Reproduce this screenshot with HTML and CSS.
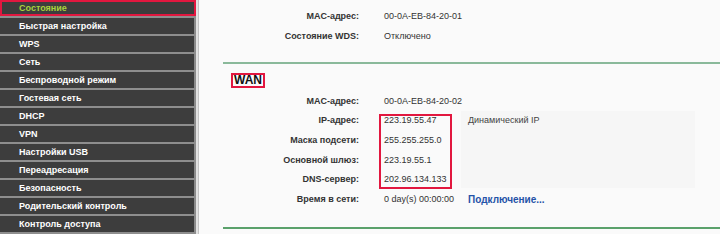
FILE: index.html
```html
<!DOCTYPE html>
<html lang="ru">
<head>
<meta charset="utf-8">
<title>Состояние</title>
<link rel="stylesheet" href="styles.css">
</head>
<body>
<div class="page">
  <nav class="menu">
    <div class="item active">Состояние</div>
    <div class="item">Быстрая настройка</div>
    <div class="item">WPS</div>
    <div class="item">Сеть</div>
    <div class="item">Беспроводной режим</div>
    <div class="item">Гостевая сеть</div>
    <div class="item">DHCP</div>
    <div class="item">VPN</div>
    <div class="item">Настройки USB</div>
    <div class="item">Переадресация</div>
    <div class="item">Безопасность</div>
    <div class="item">Родительский контроль</div>
    <div class="item">Контроль доступа</div>
  </nav>
  <div class="gutter"></div>
  <main class="main">
    <div class="tbl top">
      <div class="lbl">MAC-адрес:</div><div class="val">00-0A-EB-84-20-01</div><div class="ext"></div>
      <div class="lbl">Состояние WDS:</div><div class="val">Отключено</div><div class="ext"></div>
    </div>
    <div class="rule"></div>
    <div class="sect"><span class="sect-box">WAN</span></div>
    <div class="tbl wan">
      <div class="panel"></div>
      <div class="lbl">MAC-адрес:</div><div class="val">00-0A-EB-84-20-02</div><div class="ext"></div>
      <div class="lbl">IP-адрес:</div><div class="val">223.19.55.47</div><div class="ext">Динамический IP</div>
      <div class="lbl">Маска подсети:</div><div class="val">255.255.255.0</div><div class="ext"></div>
      <div class="lbl">Основной шлюз:</div><div class="val">223.19.55.1</div><div class="ext"></div>
      <div class="lbl">DNS-сервер:</div><div class="val">202.96.134.133</div><div class="ext"></div>
      <div class="lbl">Время в сети:</div><div class="val">0 day(s) 00:00:00</div><div class="ext"><a class="link" href="#">Подключение...</a></div>
      <div class="mark"></div>
    </div>
    <div class="rule rule-bottom"></div>
  </main>
</div>
</body>
</html>
```

FILE: styles.css
```css
html, body {
  margin: 0;
  padding: 0;
  background: #fafafa;
  overflow: hidden;
}
body {
  font-family: "Liberation Sans", Arial, sans-serif;
  font-size: 9px;
  color: #333;
}
.page {
  display: flex;
  align-items: flex-start;
  width: 720px;
  height: 234px;
}
.menu {
  flex: 0 0 196px;
  display: flex;
  flex-direction: column;
  background: #8b8b8b;
}
.item {
  height: 16px;
  line-height: 17px;
  border-bottom: 2px solid #8e8e8e;
  background: #3d3d3d;
  box-shadow: inset -2px 0 0 #8b8b8b;
  color: #fff;
  font-weight: bold;
  padding-left: 19px;
  white-space: nowrap;
}
.item.active {
  color: #a9d23c;
  box-shadow: inset 0 0 0 2px #e2173f;
}
.gutter {
  flex: 0 0 2px;
  align-self: stretch;
  background: #e2e2e2;
  border-right: 1px solid #c4c4c4;
}
.main {
  flex: 1 1 auto;
  padding-left: 24px;
  padding-top: 6px;
}
.tbl {
  position: relative;
  display: grid;
  grid-template-columns: 161px 84px 1fr;
  grid-auto-rows: 19.7px;
  align-items: center;
}
.lbl {
  font-weight: bold;
  text-align: right;
  padding-right: 25px;
  white-space: nowrap;
  position: relative;
  z-index: 1;
}
.val, .ext {
  white-space: nowrap;
  position: relative;
  z-index: 1;
}
.ext {
  color: #444;
}
.rule {
  height: 2px;
  background: #8ab99a;
  margin-top: 16.5px;
}
.rule-bottom {
  background: #5aa16b;
  margin-top: 18px;
}
.sect {
  margin-top: 9px;
  padding-left: 8px;
  height: 15px;
}
.sect-box {
  display: inline-block;
  border: 2px solid #e2173f;
  padding: 0 1px;
  line-height: 11px;
  height: 11px;
  font-size: 12px;
  font-weight: bold;
  color: #111;
}
.wan {
  margin-top: 3px;
}
.mark {
  position: absolute;
  left: 156px;
  top: 22.8px;
  width: 69px;
  height: 71px;
  border: 2px solid #e2173f;
  z-index: 2;
}
.panel {
  position: absolute;
  left: 238px;
  top: 19.7px;
  width: 234px;
  height: 77px;
  background: #f6f6f6;
  z-index: 0;
}
.link {
  color: #2553a8;
  font-weight: bold;
  font-size: 10px;
  text-decoration: none;
}
```
